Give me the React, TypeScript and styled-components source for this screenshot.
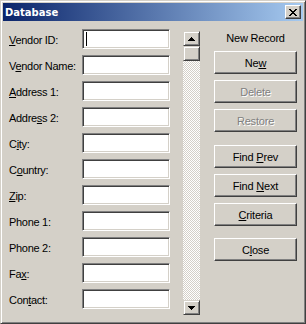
import React from 'react';
import styled, { createGlobalStyle } from 'styled-components';

const Global = createGlobalStyle`
  html, body { margin: 0; padding: 0; background: #D4D0C8; }
  body { font-family: "Liberation Sans", Arial, sans-serif; }
  #root { width: 306px; height: 324px; }
`;

const Window = styled.div`
  box-sizing: border-box;
  width: 306px;
  height: 324px;
  background: #D4D0C8;
  border: 1px solid;
  border-color: #D4D0C8 #404040 #404040 #D4D0C8;
  box-shadow: inset 1px 1px #ffffff, inset -1px -1px #808080;
  padding: 2px;
  display: flex;
  flex-direction: column;
`;

const TitleBar = styled.div`
  height: 18px;
  flex: none;
  display: flex;
  align-items: center;
  justify-content: space-between;
  padding: 0 2px 0 2px;
  background: linear-gradient(to right, #0A246A, #A6CAF0);
`;

const Title = styled.span`
  color: #ffffff;
  font-family: "DejaVu Sans", Verdana, sans-serif;
  font-weight: bold;
  font-size: 10px;
`;

const CloseBox = styled.div`
  box-sizing: border-box;
  width: 16px;
  height: 14px;
  background: #D4D0C8;
  border: 1px solid;
  border-color: #ffffff #404040 #404040 #ffffff;
  box-shadow: inset -1px -1px #808080;
  display: flex;
  align-items: center;
  justify-content: center;
`;

const Body = styled.div`
  display: flex;
  padding: 8px 0 0 5px;
`;

const Fields = styled.div`
  display: grid;
  grid-template-columns: 74px 88px;
  grid-auto-rows: 20px;
  row-gap: 6px;
  align-items: center;
`;

const Label = styled.span`
  font-size: 11px;
  letter-spacing: -0.3px;
  color: #000000;
  padding-left: 1px;
  padding-top: 1px;
`;

const Key = styled.span`
  text-decoration: underline;
  text-underline-offset: 1px;
`;

const Field = styled.div`
  box-sizing: border-box;
  position: relative;
  height: 20px;
  background: #ffffff;
  border: 1px solid;
  border-color: #808080 #ffffff #ffffff #808080;
  box-shadow: inset 1px 1px #404040, inset -1px -1px #D4D0C8;
`;

const Caret = styled.span`
  position: absolute;
  left: 3px;
  top: 2px;
  width: 1px;
  height: 14px;
  background: #000000;
`;

const ScrollBar = styled.div`
  width: 17px;
  height: 284px;
  margin: 2px 0 0 13px;
  display: flex;
  flex-direction: column;
  background-color: #D4D0C8;
  background-image: conic-gradient(#ffffff 25%, transparent 0 50%, #ffffff 0 75%, transparent 0);
  background-size: 2px 2px;
`;

const ScrollPart = styled.div<{ $push?: boolean }>`
  box-sizing: border-box;
  width: 17px;
  height: 15px;
  flex: none;
  margin-top: ${(p) => (p.$push ? 'auto' : '0')};
  background: #D4D0C8;
  border: 1px solid;
  border-color: #D4D0C8 #404040 #404040 #D4D0C8;
  box-shadow: inset 1px 1px #ffffff, inset -1px -1px #808080;
  display: flex;
  align-items: center;
  justify-content: center;
`;

const Side = styled.div`
  width: 83px;
  margin-left: 14px;
  display: flex;
  flex-direction: column;
`;

const Caption = styled.div`
  height: 16px;
  line-height: 16px;
  margin-top: 1px;
  text-align: center;
  font-size: 11px;
  letter-spacing: -0.2px;
  color: #000000;
`;

const Button = styled.div<{ $gap: number; $disabled?: boolean }>`
  box-sizing: border-box;
  height: 23px;
  margin-top: ${(p) => p.$gap}px;
  background: #D4D0C8;
  border: 1px solid;
  border-color: #ffffff #404040 #404040 #ffffff;
  box-shadow: inset -1px -1px #808080;
  display: flex;
  align-items: center;
  justify-content: center;
  font-size: 11px;
  letter-spacing: -0.2px;
  color: ${(p) => (p.$disabled ? '#808080' : '#000000')};
  text-shadow: ${(p) => (p.$disabled ? '1px 1px #ffffff' : 'none')};
`;

const Arrow = ({ down }: { down?: boolean }) => (
  <svg width="7" height="4" viewBox="0 0 7 4" shapeRendering="crispEdges">
    {down ? (
      <path d="M0 0h7v1H0zM1 1h5v1H1zM2 2h3v1H2zM3 3h1v1H3z" fill="#000" />
    ) : (
      <path d="M3 0h1v1H3zM2 1h3v1H2zM1 2h5v1H1zM0 3h7v1H0z" fill="#000" />
    )}
  </svg>
);

const CloseGlyph = () => (
  <svg width="8" height="7" viewBox="0 0 8 7" shapeRendering="crispEdges">
    <path
      d="M0 0h2v1H0zM6 0h2v1H6zM1 1h2v1H1zM5 1h2v1H5zM2 2h4v1H2zM3 3h2v1H3zM2 4h4v1H2zM1 5h2v1H1zM5 5h2v1H5zM0 6h2v1H0zM6 6h2v1H6z"
      fill="#000"
    />
  </svg>
);

type Row = { pre: string; key?: string; post: string };

const rows: Row[] = [
  { pre: '', key: 'V', post: 'endor ID:' },
  { pre: 'V', key: 'e', post: 'ndor Name:' },
  { pre: '', key: 'A', post: 'ddress 1:' },
  { pre: 'Addre', key: 's', post: 's 2:' },
  { pre: 'C', key: 'i', post: 'ty:' },
  { pre: 'C', key: 'o', post: 'untry:' },
  { pre: '', key: 'Z', post: 'ip:' },
  { pre: 'Phone 1:', post: '' },
  { pre: 'Phone 2:', post: '' },
  { pre: 'Fa', key: 'x', post: ':' },
  { pre: 'Con', key: 't', post: 'act:' },
];

type Btn = { pre: string; key?: string; post: string; gap: number; disabled?: boolean };

const buttons: Btn[] = [
  { pre: 'Ne', key: 'w', post: '', gap: 5 },
  { pre: 'Delete', post: '', gap: 6, disabled: true },
  { pre: 'Restore', post: '', gap: 6, disabled: true },
  { pre: 'Find ', key: 'P', post: 'rev', gap: 13 },
  { pre: 'Find ', key: 'N', post: 'ext', gap: 6 },
  { pre: '', key: 'C', post: 'riteria', gap: 6 },
  { pre: 'C', key: 'l', post: 'ose', gap: 12 },
];

export default function App() {
  return (
    <>
      <Global />
      <Window>
        <TitleBar>
          <Title>Database</Title>
          <CloseBox>
            <CloseGlyph />
          </CloseBox>
        </TitleBar>
        <Body>
          <Fields>
            {rows.map((r, i) => (
              <React.Fragment key={i}>
                <Label>
                  {r.pre}
                  {r.key && <Key>{r.key}</Key>}
                  {r.post}
                </Label>
                <Field>{i === 0 && <Caret />}</Field>
              </React.Fragment>
            ))}
          </Fields>
          <ScrollBar>
            <ScrollPart>
              <Arrow />
            </ScrollPart>
            <ScrollPart />
            <ScrollPart $push>
              <Arrow down />
            </ScrollPart>
          </ScrollBar>
          <Side>
            <Caption>New Record</Caption>
            {buttons.map((b, i) => (
              <Button key={i} $gap={b.gap} $disabled={b.disabled}>
                <span>
                  {b.pre}
                  {b.key && <Key>{b.key}</Key>}
                  {b.post}
                </span>
              </Button>
            ))}
          </Side>
        </Body>
      </Window>
    </>
  );
}
